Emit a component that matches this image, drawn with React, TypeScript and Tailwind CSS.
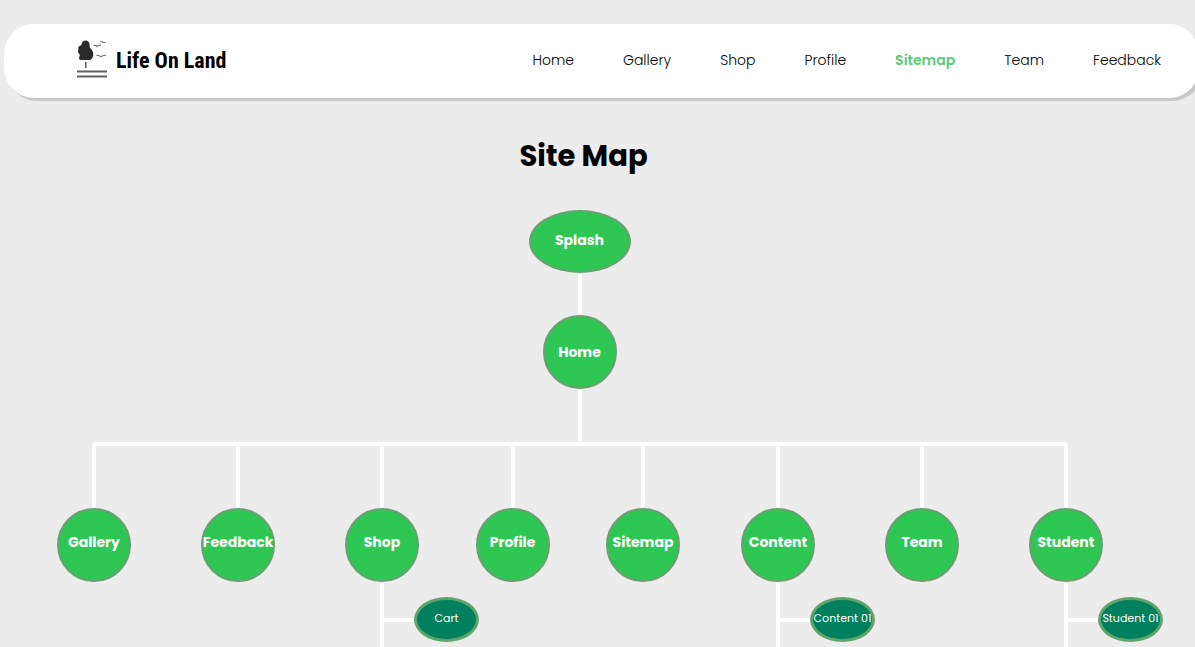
type Branch = { label: string; child?: string };

const links = ["Home", "Gallery", "Shop", "Profile", "Sitemap", "Team", "Feedback"];

const branches: Branch[] = [
  { label: "Gallery" },
  { label: "Feedback" },
  { label: "Shop", child: "Cart" },
  { label: "Profile" },
  { label: "Sitemap" },
  { label: "Content", child: "Content 01" },
  { label: "Team" },
  { label: "Student", child: "Student 01" },
];

function TreeLogo() {
  return (
    <svg width="32" height="42" viewBox="0 0 32 42" aria-hidden="true">
      <path
        d="M9.500 .5C12 .5 13.600 2.200 13.600 4.500C13.500 6.500 14 7.500 14.500 8.500C16.500 10 17.600 12.500 17.200 15C17 17.500 15.500 20 13.500 20H5C3 20 2.500 18 3.500 16.500C4 15.500 3.600 14.500 3 13.500C1.600 12 1.600 10.500 2.600 9.500C1.500 8 2.400 6 4.500 5.500C5.500 5.200 5.400 4.500 5.800 3.500C6.400 1.500 7.800 .5 9.500 .5Z"
        fill="#2b2b2b"
      />
      <path d="M9.800 22V28" stroke="#444" strokeWidth="1.300" />
      <path
        d="M17.500 5.500Q19.500 4.900 21 6.500Q22.500 5 25 5.200M24 1.600Q26 1.200 27 2.500Q28.500 2 29.500 2.800M20.500 15.600Q23 14.800 25 16.800Q27 15 30 15.600"
        fill="none"
        stroke="#777"
        strokeWidth="1.200"
      />
      <path d="M1 31.500H31M1 36.500H31" stroke="#625c5e" strokeWidth="2" />
    </svg>
  );
}

function Header() {
  return (
    <header className="ml-1 mt-6 flex h-[74px] w-full shrink-0 items-center justify-between rounded-[30px] bg-white pl-[72px] pr-[38px] shadow-[3px_3px_0_#c8c8c8]">
      <a href="#home" className="flex items-center gap-2 whitespace-nowrap text-[22px] leading-6 font-bold text-black font-['Roboto_Condensed','Open_Sans_Condensed',Roboto,sans-serif]">
        <TreeLogo />
        Life On Land
      </a>
      <nav className="flex gap-[49px] pb-0.5 text-sm">
        {links.map((l) => (
          <a
            key={l}
            href={"#" + l.toLowerCase()}
            className={l === "Sitemap" ? "font-semibold text-[#5dcb79]" : "font-light text-black"}
          >
            {l}
          </a>
        ))}
      </nav>
    </header>
  );
}

function BranchColumn({ branch, first, last }: { branch: Branch; first: boolean; last: boolean }) {
  return (
    <li className="flex min-w-0 flex-col items-center">
      <div className="flex h-1 w-full">
        <span className={first ? "flex-1" : "flex-1 bg-white"} />
        <span className={first ? "w-1 rounded-tl-sm bg-white" : last ? "w-1 rounded-tr-sm bg-white" : "w-1 bg-white"} />
        <span className={last ? "flex-1" : "flex-1 bg-white"} />
      </div>
      <span className="mb-px h-[61px] w-1 bg-white" />
      <a
        href={"#" + branch.label.toLowerCase()}
        className="flex size-[74px] shrink-0 items-center justify-center rounded-full border-2 border-[#6b9e73] bg-[#2fc754] pb-1.5 text-sm font-bold text-white"
      >
        {branch.label}
      </a>
      {branch.child && (
        <div className="mt-px flex w-full grow">
          <span className="flex-1" />
          <span className="w-1 bg-white" />
          <div className="flex min-w-0 flex-1 items-start pt-[14px]">
            <div className="flex items-center">
              <span className="h-1 w-[30px] shrink-0 bg-white" />
              <a
                href={"#" + branch.child.toLowerCase().replace(" ", "-")}
                className="flex h-[45px] w-[65px] shrink-0 items-center justify-center rounded-[50%] border-3 border-[#5fa46c] bg-[#00805c] pb-0.5 text-[11px] whitespace-nowrap text-white"
              >
                {branch.child}
              </a>
            </div>
          </div>
        </div>
      )}
    </li>
  );
}

export default function App() {
  return (
    <div className="flex min-h-screen flex-col overflow-hidden bg-[#ececec] font-['Poppins','Inter',sans-serif]">
      <Header />
      <main className="flex grow flex-col pl-[22px] pr-[66px]">
        <h1 className="mt-[38px] pl-4 text-center text-[29px] leading-10 font-bold text-black">Site Map</h1>
        <div className="mt-[34px] flex flex-col items-center pl-2">
          <a
            href="#splash"
            className="flex h-[63px] w-[102px] items-center justify-center rounded-[50%] border-2 border-[#6b9e73] bg-[#2fc754] pb-1 text-sm font-bold text-white"
          >
            Splash
          </a>
          <span className="my-px h-10 w-1 bg-white" />
          <a
            href="#home"
            className="flex size-[74px] items-center justify-center rounded-full border-2 border-[#6b9e73] bg-[#2fc754] text-sm font-bold text-white"
          >
            Home
          </a>
          <span className="mt-px h-[52px] w-1 bg-white" />
        </div>
        <ul className="grid grow grid-cols-[144fr_144fr_144fr_117fr_144fr_126fr_162fr_126fr]">
          {branches.map((b, i) => (
            <BranchColumn key={b.label} branch={b} first={i === 0} last={i === branches.length - 1} />
          ))}
        </ul>
      </main>
    </div>
  );
}
